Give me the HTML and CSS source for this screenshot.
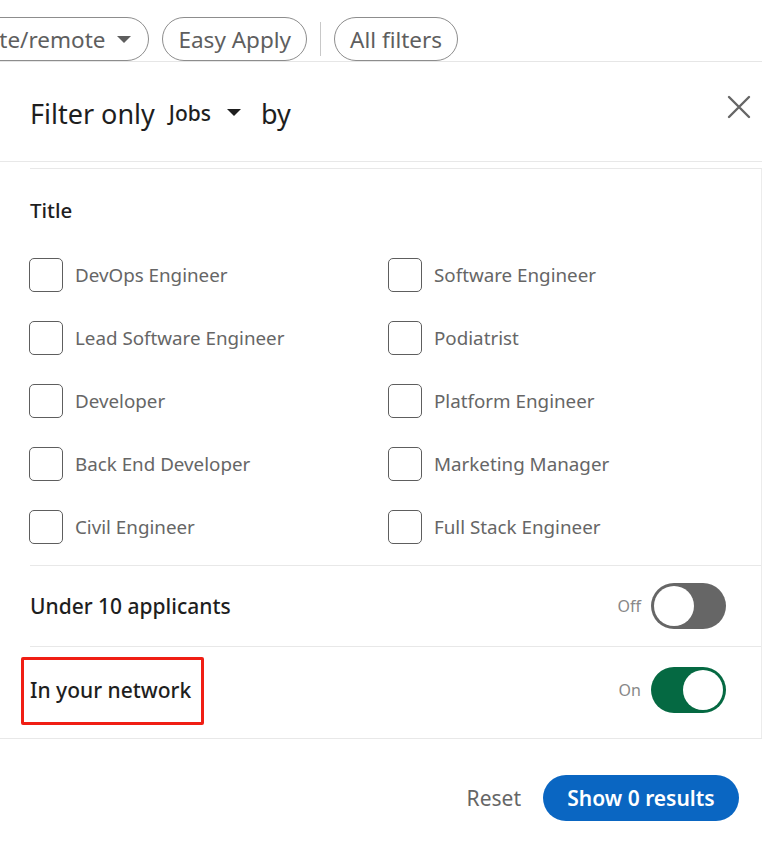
FILE: index.html
```html
<!DOCTYPE html>
<html lang="en">
<head>
<meta charset="utf-8">
<title>All filters</title>
<link rel="stylesheet" href="styles.css">
</head>
<body>
<div class="topbar">
  <button class="pill pill-cut">On-site/remote <span class="caret"></span></button>
  <button class="pill">Easy Apply</button>
  <span class="vdiv"></span>
  <button class="pill">All filters</button>
</div>
<div class="modal">
  <div class="modal-head">
    <h2 class="head-title">Filter only <span class="jobs">Jobs <span class="caret caret-dark"></span></span> by</h2>
    <button class="close" aria-label="Dismiss">
      <svg width="24" height="24" viewBox="0 0 24 24"><path d="M2 2 L22 22 M22 2 L2 22" stroke="#666" stroke-width="2.4" stroke-linecap="round" fill="none"/></svg>
    </button>
  </div>
  <div class="modal-body">
    <div class="scroll">
      <section class="sec sec-title">
        <h3 class="sec-h">Title</h3>
        <div class="checks">
          <label class="chk"><span class="box"></span>DevOps Engineer</label>
          <label class="chk"><span class="box"></span>Software Engineer</label>
          <label class="chk"><span class="box"></span>Lead Software Engineer</label>
          <label class="chk"><span class="box"></span>Podiatrist</label>
          <label class="chk"><span class="box"></span>Developer</label>
          <label class="chk"><span class="box"></span>Platform Engineer</label>
          <label class="chk"><span class="box"></span>Back End Developer</label>
          <label class="chk"><span class="box"></span>Marketing Manager</label>
          <label class="chk"><span class="box"></span>Civil Engineer</label>
          <label class="chk"><span class="box"></span>Full Stack Engineer</label>
        </div>
      </section>
      <section class="sec toggle-row row-a">
        <span class="t-label">Under 10 applicants</span>
        <span class="t-ctl"><span class="t-state">Off</span><span class="switch"><span class="knob"></span></span></span>
      </section>
      <section class="sec toggle-row row-b">
        <span class="t-label mark">In your network</span>
        <span class="t-ctl"><span class="t-state">On</span><span class="switch on"><span class="knob"></span></span></span>
      </section>
    </div>
  </div>
  <div class="modal-foot">
    <button class="reset">Reset</button>
    <button class="primary">Show 0 results</button>
  </div>
</div>
</body>
</html>
```
FILE: styles.css
```css
* { box-sizing: border-box; }
html, body { margin: 0; padding: 0; background: #fff; }
body {
  font-family: "Noto Sans", "Open Sans", sans-serif;
  color: #1e1e1e;
  width: 762px;
  height: 848px;
  overflow: hidden;
}
button { font-family: inherit; cursor: pointer; }

.topbar {
  height: 62px;
  display: flex;
  align-items: flex-start;
  gap: 13px;
  padding-top: 17px;
  border-bottom: 1px solid #e6e6e6;
  overflow: hidden;
}
.pill {
  height: 44px;
  padding: 0 15px;
  border: 1px solid #8d8d8d;
  border-radius: 22px;
  background: #fff;
  color: #5e5e5e;
  font-size: 22.5px;
  display: inline-flex;
  align-items: center;
  gap: 10px;
  white-space: nowrap;
  flex: none;
}
.pill-cut { margin-left: -72px; gap: 12px; padding-right: 17px; }
.caret {
  display: inline-block;
  width: 0; height: 0;
  border-left: 7px solid transparent;
  border-right: 7px solid transparent;
  border-top: 7px solid #5e5e5e;
}
.caret-dark { border-top-color: #1e1e1e; margin-left: 16px; }
.vdiv {
  width: 1px;
  height: 34px;
  margin-top: 5px;
  background: #c8c8c8;
  flex: none;
}

.modal-head {
  height: 100px;
  display: flex;
  align-items: center;
  justify-content: space-between;
  padding: 4px 11px 0 30px;
  border-bottom: 1px solid #e8e8e8;
}
.head-title {
  margin: 0;
  font-size: 27px;
  font-weight: 400;
  color: #1e1e1e;
  display: flex;
  align-items: center;
}
.jobs {
  font-size: 21px;
  font-weight: 500;
  margin: -2px 20px 0 14px;
  display: inline-flex;
  align-items: center;
}
.close {
  border: 0;
  background: none;
  padding: 0;
  width: 24px;
  height: 24px;
  margin-top: -14px;
}

.modal-body { padding-top: 6px; }
.scroll {
  margin-left: 30px;
  border-top: 1px solid #e8e8e8;
  border-right: 1px solid #ececec;
}
.sec-title { padding: 26px 0 21px 0; border-bottom: 1px solid #e8e8e8; }
.sec-h {
  margin: 0 0 33px 0;
  font-size: 20.5px;
  font-weight: 500;
  color: #1e1e1e;
  line-height: 30px;
}
.checks {
  display: grid;
  grid-template-columns: 359px 1fr;
  row-gap: 29px;
}
.chk {
  display: flex;
  align-items: center;
  gap: 12px;
  font-size: 18.8px;
  color: #666;
  height: 34px;
  white-space: nowrap;
  margin-left: -1px;
}
.box {
  width: 34px;
  height: 34px;
  border: 1.5px solid #5e5e5e;
  border-radius: 5px;
  flex: none;
}

.toggle-row {
  display: flex;
  align-items: center;
  justify-content: space-between;
  padding-right: 35px;
  border-bottom: 1px solid #e8e8e8;
}
.row-a { height: 81px; }
.row-b { height: 91px; margin-left: -30px; padding-left: 30px; border-bottom: 0; }
.t-label {
  font-size: 21px;
  font-weight: 500;
  color: #1e1e1e;
}
.mark {
  border: 3px solid #f01e14;
  padding: 16px 10px 18px 6px;
  margin-left: -9px;
  margin-top: -4px;
  border-radius: 2px;
}
.t-ctl {
  display: flex;
  align-items: center;
  gap: 10px;
}
.t-state { font-size: 16px; color: #888; }
.row-b .t-ctl { margin-top: -6px; }
.switch {
  width: 75px;
  height: 46px;
  border-radius: 23px;
  background: #666;
  position: relative;
  display: inline-block;
}
.knob {
  position: absolute;
  top: 3px;
  left: 3px;
  width: 40px;
  height: 40px;
  border-radius: 50%;
  background: #fff;
}
.switch.on { background: #056942; }
.switch.on .knob { left: 32px; }

.modal-foot {
  border-top: 1px solid #e8e8e8;
  height: 110px;
  display: flex;
  align-items: center;
  justify-content: flex-end;
  gap: 22px;
  padding: 8px 23px 0 0;
}
.reset {
  border: 0;
  background: none;
  font-size: 21px;
  color: #666;
  padding: 0;
}
.primary {
  height: 46px;
  width: 196px;
  border: 0;
  border-radius: 23px;
  background: #0a66c2;
  color: #fff;
  font-size: 21px;
  font-weight: 600;
}
```
